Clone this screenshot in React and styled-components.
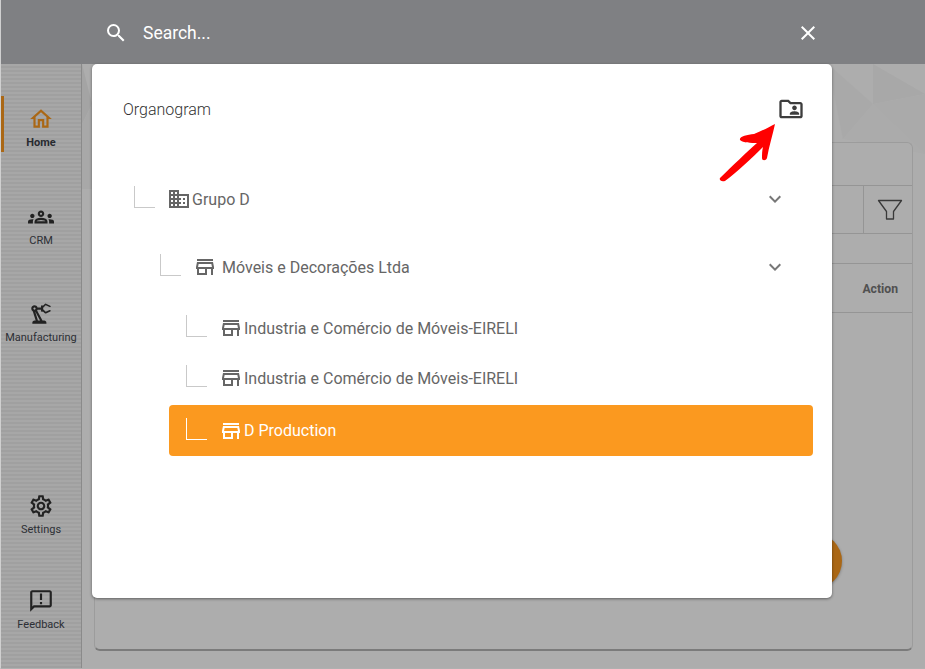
import React from 'react';
import styled, { createGlobalStyle } from 'styled-components';
import {
  MdSearch,
  MdClose,
  MdOutlineHome,
  MdOutlineGroups,
  MdOutlinePrecisionManufacturing,
  MdOutlineSettings,
  MdOutlineAnnouncement,
  MdOutlineFolderShared,
  MdOutlineStore,
  MdOutlineDomain,
  MdExpandMore,
} from 'react-icons/md';

const GlobalStyle = createGlobalStyle`
  * { box-sizing: border-box; }
  html, body { margin: 0; padding: 0; height: 100%; }
  body { font-family: Roboto, "Liberation Sans", sans-serif; overflow: hidden; }
`;

const Page = styled.div`
  position: relative;
  width: 925px;
  height: 669px;
  overflow: hidden;
  background: #ffffff;
  border-left: 1px solid #d0d0d0;
  border-bottom: 1px solid #b0b0b0;
  display: flex;
  flex-direction: column;
`;

const TopBar = styled.div`
  height: 64px;
  flex: none;
  background: #bcbdc1;
`;

const Body = styled.div`
  flex: 1;
  display: grid;
  grid-template-columns: 81px 1fr;
  min-height: 0;
`;

const Sidebar = styled.nav`
  display: flex;
  flex-direction: column;
  justify-content: space-between;
  padding: 32px 0 35px;
  border-right: 1px solid #cccccc;
  background: repeating-linear-gradient(180deg, #f6f6f6 0, #f6f6f6 2px, #ececec 2px, #ececec 4px);
`;

const NavGroup = styled.div`
  display: flex;
  flex-direction: column;
  gap: ${(p) => p.$gap}px;
`;

const NavItem = styled.div`
  height: 56px;
  padding-top: ${(p) => (p.$active ? 6 : 8)}px;
  position: relative;
  display: flex;
  flex-direction: column;
  align-items: center;
  justify-content: center;
  gap: 4px;
  font-size: 11px;
  font-weight: ${(p) => (p.$active ? 700 : 400)};
  white-space: nowrap;
  color: ${(p) => (p.$active ? '#3c4048' : '#444850')};

  svg {
    color: ${(p) => (p.$active ? '#fb991f' : '#333333')};
    font-size: 26px;
  }

  &::before {
    content: '';
    display: ${(p) => (p.$active ? 'block' : 'none')};
    position: absolute;
    left: 0;
    top: 0;
    bottom: 0;
    width: 3px;
    background: #fb991f;
  }
`;

const Main = styled.main`
  position: relative;
  padding: 78px 12px 17px 12px;
  min-width: 0;
`;

const Backdrop = styled.svg`
  position: absolute;
  top: 0;
  left: 0;
  width: 100%;
  height: 125px;
`;

const DataCard = styled.section`
  position: relative;
  height: 100%;
  background: #ffffff;
  border: 1px solid #e6e6e6;
  border-bottom: 2px solid #b5b5b5;
  border-radius: 6px;
  display: flex;
  flex-direction: column;
`;

const CardRow = styled.div`
  height: ${(p) => p.$height}px;
  flex: none;
  border-bottom: 1px solid #dcdcdc;
  display: flex;
  justify-content: flex-end;
  align-items: center;
`;

const FilterCell = styled.div`
  width: 49px;
  height: 100%;
  padding-left: 3px;
  border-left: 1px solid #dcdcdc;
  display: flex;
  align-items: center;
  justify-content: center;
  color: #555555;
`;

const ActionHead = styled.span`
  padding: 2px 14px 0 0;
  font-size: 12.2px;
  font-weight: 700;
  color: #777777;
`;

const Fab = styled.div`
  position: absolute;
  right: 70px;
  bottom: 60px;
  width: 56px;
  height: 56px;
  border-radius: 50%;
  background: #fb991f;
  box-shadow: 0 1px 3px rgba(0, 0, 0, 0.3);
`;

const Overlay = styled.div`
  position: absolute;
  inset: 0;
  background: rgba(0, 0, 0, 0.32);
  display: flex;
  flex-direction: column;
`;

const SearchBar = styled.div`
  height: 64px;
  flex: none;
  padding: 2px 105px 0 103px;
  display: flex;
  align-items: center;
  color: #ffffff;
`;

const SearchText = styled.span`
  flex: 1;
  margin-left: 15px;
  font-size: 17.5px;
  font-weight: 400;
`;

const Modal = styled.div`
  position: relative;
  margin-left: 91px;
  width: 740px;
  height: 534px;
  flex: none;
  background: #ffffff;
  border-radius: 5px;
  box-shadow: 0 1px 3px rgba(0, 0, 0, 0.45);
  padding: 0 19px 0 25px;
`;

const ModalHeader = styled.header`
  height: 90px;
  padding: 0 8px 0 6px;
  display: flex;
  align-items: center;
  justify-content: space-between;
  margin-bottom: 20px;
`;

const ModalTitle = styled.h2`
  margin: 0;
  font-size: 16px;
  font-weight: 300;
  color: #333333;
`;

const FolderButton = styled.div`
  display: flex;
  font-size: 28px;
  color: #3d3d3d;
`;

const Arrow = styled.svg`
  position: absolute;
  left: 625px;
  top: 58px;
  width: 64px;
  height: 64px;
`;

const Tree = styled.div`
  display: flex;
  flex-direction: column;
`;

const TreeRow = styled.div`
  height: ${(p) => (p.$selected ? 51 : 50)}px;
  margin-top: ${(p) => p.$top}px;
  margin-left: ${(p) => p.$level * 26}px;
  padding-left: 17px;
  padding-right: 26px;
  border-radius: 4px;
  display: flex;
  align-items: center;
  color: ${(p) => (p.$selected ? '#ffffff' : '#666666')};
  background: ${(p) => (p.$selected ? '#fb991f' : 'transparent')};
  font-size: 16px;
  font-weight: 400;
  white-space: nowrap;
`;

const Elbow = styled.span`
  width: 21px;
  height: 22px;
  flex: none;
  margin-bottom: 4px;
  border-left: 1px solid ${(p) => (p.$selected ? '#ffffff' : '#c9c9c9')};
  border-bottom: 1px solid ${(p) => (p.$selected ? '#ffffff' : '#c9c9c9')};
`;

const NodeIcon = styled.span`
  margin-left: 12px;
  display: flex;
  font-size: 24px;
`;

const NodeLabel = styled.span`
  flex: 1;
  margin-left: ${(p) => p.$gap}px;
`;

const Chevron = styled.span`
  display: flex;
  font-size: 24px;
  color: #777777;
`;

const nodes = [
  { label: 'Grupo D', level: 0, top: 0, gap: 1, icon: MdOutlineDomain, open: true },
  { label: 'Móveis e Decorações Ltda', level: 1, top: 18, gap: 5, icon: MdOutlineStore, open: true },
  { label: 'Industria e Comércio de Móveis-EIRELI', level: 2, top: 11, gap: 1, icon: MdOutlineStore },
  { label: 'Industria e Comércio de Móveis-EIRELI', level: 2, top: 0, gap: 1, icon: MdOutlineStore },
  { label: 'D Production', level: 2, top: 2, gap: 1, icon: MdOutlineStore, selected: true },
];

const shards = [
  ['745,0 790,40 760,75', '#fafafa'],
  ['760,75 790,40 842,90', '#fdfdfd'],
  ['790,0 842,30 790,40', '#f8f8f8'],
  ['0,0 10,40 0,60', '#f2f2f2'],
  ['0,60 10,40 10,125 0,125', '#f8f8f8'],
  ['790,40 842,30 842,90', '#fbfbfb'],
];

const FunnelIcon = () => (
  <svg width="26" height="22" viewBox="0 0 26 22" fill="none" stroke="currentColor" strokeWidth="1.3" strokeLinejoin="round">
    <path d="M1.5 1.5h23l-8 11v7.5h-7v-7.5z" />
  </svg>
);

const App = () => (
  <>
    <GlobalStyle />
    <Page>
      <TopBar />
      <Body>
        <Sidebar>
          <NavGroup $gap={41}>
            <NavItem $active>
              <MdOutlineHome />
              Home
            </NavItem>
            <NavItem>
              <MdOutlineGroups />
              CRM
            </NavItem>
            <NavItem>
              <MdOutlinePrecisionManufacturing />
              Manufacturing
            </NavItem>
          </NavGroup>
          <NavGroup $gap={39}>
            <NavItem>
              <MdOutlineSettings />
              Settings
            </NavItem>
            <NavItem>
              <MdOutlineAnnouncement />
              Feedback
            </NavItem>
          </NavGroup>
        </Sidebar>
        <Main>
          <Backdrop viewBox="0 0 842 125" preserveAspectRatio="none">
            {shards.map(([points, fill]) => (
              <polygon key={points} points={points} fill={fill} />
            ))}
          </Backdrop>
          <DataCard>
            <CardRow $height={43} />
            <CardRow $height={48}>
              <FilterCell>
                <FunnelIcon />
              </FilterCell>
            </CardRow>
            <CardRow $height={30} />
            <CardRow $height={49}>
              <ActionHead>Action</ActionHead>
            </CardRow>
            <Fab />
          </DataCard>
        </Main>
      </Body>
      <Overlay>
        <SearchBar>
          <MdSearch size={24} />
          <SearchText>Search...</SearchText>
          <MdClose size={24} />
        </SearchBar>
        <Modal>
          <ModalHeader>
            <ModalTitle>Organogram</ModalTitle>
            <FolderButton>
              <MdOutlineFolderShared />
            </FolderButton>
          </ModalHeader>
          <Tree>
            {nodes.map((node) => (
              <TreeRow
                key={`${node.label}-${node.top}`}
                $level={node.level}
                $top={node.top}
                $selected={node.selected}
              >
                <Elbow $selected={node.selected} />
                <NodeIcon>
                  <node.icon />
                </NodeIcon>
                <NodeLabel $gap={node.gap}>{node.label}</NodeLabel>
                {node.open && (
                  <Chevron>
                    <MdExpandMore />
                  </Chevron>
                )}
              </TreeRow>
            ))}
          </Tree>
          <Arrow viewBox="0 0 64 64">
            <path
              d="M3 56 C15 44 30 30 40 21 C34 21 26 21 23 18 C22 14 30 13 37 12 C45 9 52 5 58 2 C56 12 52 24 50 36 C49 39 45 39 45 36 C45 32 45 29 46 25 C35 36 20 50 8 59 C4 60 2 58 3 56 Z"
              fill="#ff0000"
            />
          </Arrow>
        </Modal>
      </Overlay>
    </Page>
  </>
);

export default App;
